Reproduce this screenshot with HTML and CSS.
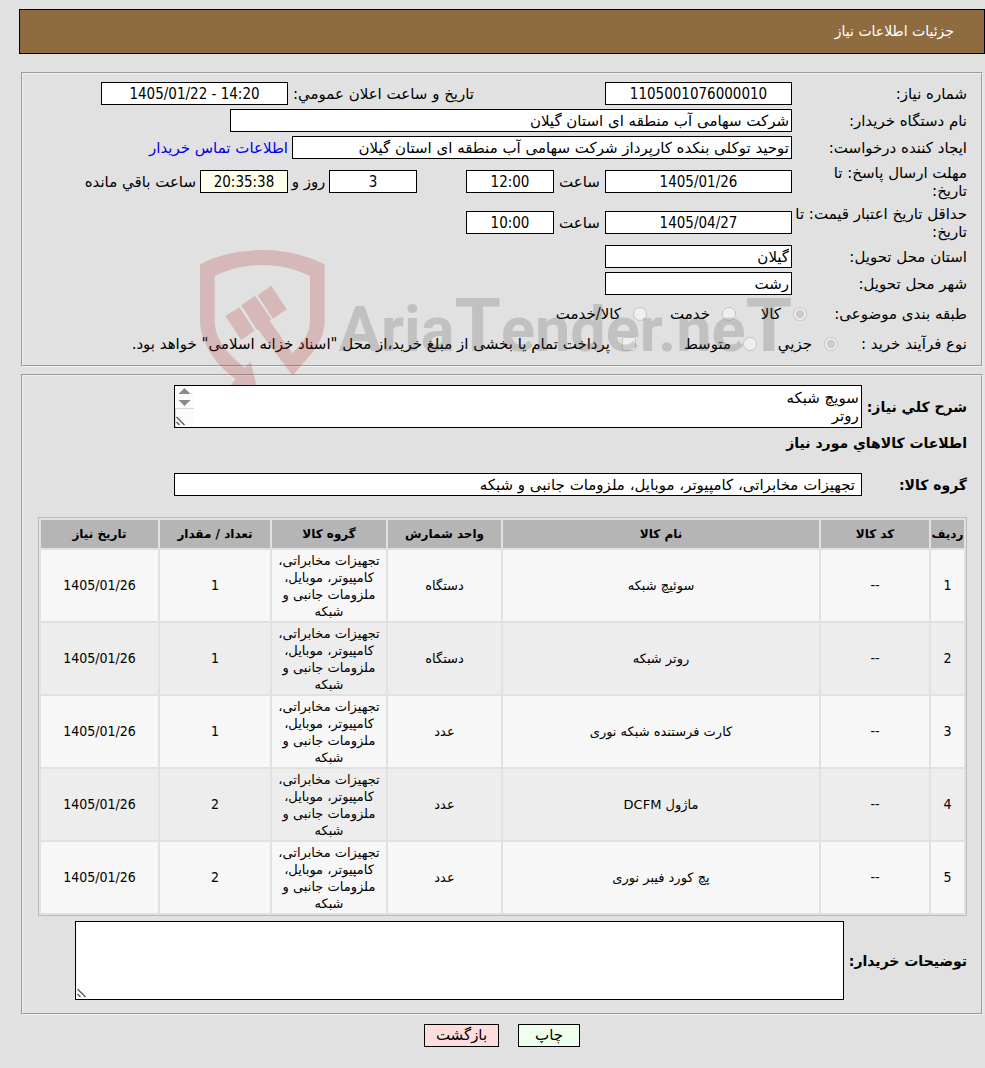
FILE: index.html
```html
<!DOCTYPE html>
<html lang="fa" dir="rtl">

<head>
    <meta charset="UTF-8">
    <meta name="viewport" content="width=device-width, initial-scale=1.0">
    <title>جزئیات اطلاعات نیاز</title>
    <link rel="stylesheet" href="styles.css">
</head>

<body>
    <div class="page">
        <h1 class="title">جزئیات اطلاعات نیاز</h1>

        <fieldset class="box info">
            <div class="row">
                <label class="name" for="needNo">شماره نیاز:</label>
                <input class="field mid num" type="text" id="needNo" value="1105001076000010" readonly>
                <label class="announce" for="pubDate">تاريخ و ساعت اعلان عمومي:</label>
                <input class="field mid num" type="text" id="pubDate" value="1405/01/22 - 14:20" readonly>
            </div>
            <div class="row">
                <label class="name" for="org">نام دستگاه خریدار:</label>
                <input class="field wide" type="text" id="org" value="شرکت سهامی آب منطقه ای استان گیلان" readonly>
            </div>
            <div class="row">
                <label class="name" for="creator">ایجاد کننده درخواست:</label>
                <input class="field long" type="text" id="creator" value="توحید توکلی بنکده کارپرداز شرکت سهامی آب منطقه ای استان گیلان" readonly>
                <a class="contact" href="#">اطلاعات تماس خریدار</a>
            </div>
            <div class="row double">
                <label class="name" for="replyDate">مهلت ارسال پاسخ: تا<br>تاریخ:</label>
                <input class="field mid num" type="text" id="replyDate" value="1405/01/26" readonly>
                <label class="hour" for="replyHour">ساعت</label>
                <input class="field short num" type="text" id="replyHour" value="12:00" readonly>
                <input class="field short num days" type="text" id="leftDays" value="3" readonly>
                <label class="day" for="leftDays">روز و</label>
                <input class="field short num left-time" type="text" id="leftTime" value="20:35:38" readonly>
                <label class="after" for="leftTime">ساعت باقي مانده</label>
            </div>
            <div class="row double">
                <label class="name" for="priceDate">حداقل تاریخ اعتبار قیمت: تا<br>تاریخ:</label>
                <input class="field mid num" type="text" id="priceDate" value="1405/04/27" readonly>
                <label class="hour" for="priceHour">ساعت</label>
                <input class="field short num" type="text" id="priceHour" value="10:00" readonly>
            </div>
            <div class="row">
                <label class="name" for="state">استان محل تحویل:</label>
                <input class="field mid" type="text" id="state" value="گیلان" readonly>
            </div>
            <div class="row">
                <label class="name" for="city">شهر محل تحویل:</label>
                <input class="field mid" type="text" id="city" value="رشت" readonly>
            </div>
            <div class="row options">
                <span class="name subject">طبقه بندی موضوعی:</span>
                <label class="opt goods"><input type="radio" name="subject" checked disabled>کالا</label>
                <label class="opt service"><input type="radio" name="subject" disabled>خدمت</label>
                <label class="opt"><input type="radio" name="subject" disabled>کالا/خدمت</label>
            </div>
            <div class="row options">
                <span class="name process">نوع فرآیند خرید :</span>
                <label class="opt small"><input type="radio" name="process" checked disabled>جزيي</label>
                <label class="opt medium"><input type="radio" name="process" disabled>متوسط</label>
                <label class="opt"><input type="checkbox" disabled>پرداخت تمام یا بخشی از مبلغ خرید،از محل "اسناد خزانه اسلامی" خواهد بود.</label>
            </div>
        </fieldset>

        <fieldset class="box goods-box">
            <div class="line">
                <label class="bold" for="desc">شرح کلي نیاز:</label>
                <div class="area-wrap">
                    <textarea class="area desc" id="desc" readonly>سویچ شبکه
روتر</textarea>
                    <svg class="spin" width="19" height="41" viewBox="0 0 19 41">
                        <path fill="#fbfbfb" d="M0 0h19v41H0z" />
                        <path fill="#8a8a8a" d="M9.500 2l6 6h-12zM9.500 20l-6-6h12z" />
                        <path stroke="#d6d6d6" d="M0 22.500h19M.5 23v18" />
                        <path stroke="#555" stroke-width="1.300" d="M1.500 31l8 8M1.500 36l3 3" />
                    </svg>
                </div>
            </div>
            <h2 class="bold subtitle">اطلاعات کالاهاي مورد نیاز</h2>
            <div class="line group-line">
                <label class="bold" for="group">گروه کالا:</label>
                <input class="field group" type="text" id="group" value="تجهیزات مخابراتی، کامپیوتر، موبایل، ملزومات جانبی و شبکه" readonly>
            </div>

            <table class="grid">
                <colgroup>
                    <col class="c-row"><col class="c-code"><col><col class="c-unit"><col class="c-group"><col class="c-count"><col class="c-date">
                </colgroup>
                <thead>
                    <tr>
                        <th>ردیف</th>
                        <th>کد کالا</th>
                        <th>نام کالا</th>
                        <th>واحد شمارش</th>
                        <th>گروه کالا</th>
                        <th>تعداد / مقدار</th>
                        <th>تاریخ نیاز</th>
                    </tr>
                </thead>
                <tbody>
                    <tr>
                        <td class="num">1</td>
                        <td class="num">--</td>
                        <td>سوئیچ شبکه</td>
                        <td>دستگاه</td>
                        <td>تجهیزات مخابراتی،<br>کامپیوتر، موبایل،<br>ملزومات جانبی و<br>شبکه</td>
                        <td class="num">1</td>
                        <td class="num">1405/01/26</td>
                    </tr>
                    <tr>
                        <td class="num">2</td>
                        <td class="num">--</td>
                        <td>روتر شبکه</td>
                        <td>دستگاه</td>
                        <td>تجهیزات مخابراتی،<br>کامپیوتر، موبایل،<br>ملزومات جانبی و<br>شبکه</td>
                        <td class="num">1</td>
                        <td class="num">1405/01/26</td>
                    </tr>
                    <tr>
                        <td class="num">3</td>
                        <td class="num">--</td>
                        <td>کارت فرستنده شبکه نوری</td>
                        <td>عدد</td>
                        <td>تجهیزات مخابراتی،<br>کامپیوتر، موبایل،<br>ملزومات جانبی و<br>شبکه</td>
                        <td class="num">1</td>
                        <td class="num">1405/01/26</td>
                    </tr>
                    <tr>
                        <td class="num">4</td>
                        <td class="num">--</td>
                        <td>ماژول DCFM</td>
                        <td>عدد</td>
                        <td>تجهیزات مخابراتی،<br>کامپیوتر، موبایل،<br>ملزومات جانبی و<br>شبکه</td>
                        <td class="num">2</td>
                        <td class="num">1405/01/26</td>
                    </tr>
                    <tr>
                        <td class="num">5</td>
                        <td class="num">--</td>
                        <td>پچ کورد فیبر نوری</td>
                        <td>عدد</td>
                        <td>تجهیزات مخابراتی،<br>کامپیوتر، موبایل،<br>ملزومات جانبی و<br>شبکه</td>
                        <td class="num">2</td>
                        <td class="num">1405/01/26</td>
                    </tr>
                </tbody>
            </table>

            <div class="line notes-line">
                <label class="bold" for="notes">توضیحات خریدار:</label>
                <div class="area-wrap">
                    <textarea class="area notes" id="notes" readonly></textarea>
                    <svg class="grip" width="11" height="11" viewBox="0 0 11 11">
                        <path stroke="#555" stroke-width="1.300" d="M1.500 1l8 8M1.500 6l3 3" />
                    </svg>
                </div>
            </div>
        </fieldset>

        <div class="buttons">
            <button class="btn print" type="button">چاپ</button>
            <button class="btn back" type="button">بازگشت</button>
        </div>

        <!-- site watermark -->
        <svg class="watermark" width="610" height="137" viewBox="357 57 1830 411">
            <g fill="#b4282d" fill-opacity=".22">
                <path d="M360 103C470 46 620 46 734 103V270C734 340 690 375 638 437L533 297L530 299L484 226L525 197L574 268L570 274L637 370C672 335 690 310 690 270V138C600 94 495 94 404 138V270C404 320 430 360 494 413L512 395L530 470L452 465L467 447C400 400 360 330 360 270Z" />
                <path d="M436 258L478 232L524 302L484 330ZM533 196L574 167L620 238L579 266Z" />
            </g>
            <text class="brand" x="776" y="363">Aria<tspan class="big">T</tspan>ender.ne<tspan class="big">T</tspan></text>
        </svg>
    </div>
</body>

</html>
```
FILE: styles.css
```css
* {
    box-sizing: border-box;
}

body {
    margin: 0;
    background-color: #e1e1e1;
    color: #000;
    font: 15px/18px "DejaVu Sans", sans-serif;
}

input,
textarea,
button {
    margin: 0;
    font: inherit;
    color: inherit;
}

.page {
    position: relative;
    padding: 9px 0 22px;
}

.title {
    margin: 0 0 0 19px;
    padding: 0 30px;
    height: 45px;
    border: 1px solid #000;
    background-color: #8f6c40;
    color: #fff;
    font-size: 14px;
    font-weight: normal;
    line-height: 43px;
}

/* boxes */
.box {
    min-width: 0;
    margin: 0 2px 0 21px;
    padding: 8px 14px;
    border: 2px groove threedface;
}

.info {
    margin-top: 18px;
    margin-bottom: 7px;
    padding-bottom: 6px;
}

.row {
    display: flex;
    align-items: center;
    height: 23px;
    margin-bottom: 4px;
    white-space: nowrap;
}

.row.double {
    height: 37px;
}

.row.options {
    height: 30px;
    margin: 0;
}

.name {
    flex: none;
    width: 175px;
}

.field {
    flex: none;
    height: 23px;
    padding: 0 2px;
    border: 1px solid #000;
    background-color: #fff;
}

.num {
    direction: ltr;
    font-family: "DejaVu Sans Condensed", "DejaVu Sans", sans-serif;
    text-align: center;
}

.mid {
    width: 187px;
}

.wide {
    width: 562px;
}

.long {
    width: 500px;
}

.short {
    width: 88px;
}

.days {
    margin-right: 49px;
}

.left-time {
    background-color: #ffffee;
}

.announce {
    width: 186px;
    margin-right: 131px;
}

.contact {
    margin-right: 4px;
    color: #0000ee;
    text-decoration: none;
}

.hour {
    width: 51px;
    text-align: center;
}

.day {
    width: 41px;
    text-align: center;
}

.after {
    margin-right: 4px;
}

/* radio rows */
.subject {
    width: 160px;
}

.process {
    width: 129px;
}

.opt {
    display: flex;
    align-items: center;
    gap: 12px;
}

.opt input {
    width: 14px;
    height: 14px;
}

.goods {
    width: 71px;
}

.service {
    width: 89px;
}

.small {
    width: 81px;
}

.medium {
    width: 121px;
}

/* goods */
.goods-box {
    padding: 9px 14px 13px 15px;
}

.line {
    display: flex;
    align-items: center;
    gap: 5px;
}

.bold {
    font-size: 14px;
    font-weight: bold;
}

.area-wrap {
    position: relative;
    display: flex;
}

.area {
    display: block;
    padding: 3px 2px;
    border: 1px solid #000;
    background-color: #fff;
    resize: none;
    overflow: hidden;
}

.desc {
    width: 688px;
    height: 43px;
}

.spin {
    position: absolute;
    left: 1px;
    top: 1px;
}

.grip {
    position: absolute;
    left: 1px;
    bottom: 1px;
}

.line .bold {
    flex: none;
    min-width: 100px;
}

.subtitle {
    margin: 6px 0 21px;
}

.group {
    width: 688px;
    padding: 0 6px;
}

.grid {
    width: 100%;
    margin: 21px 0 5px;
    border: 1px solid #bbb;
    border-spacing: 2px;
    table-layout: fixed;
    font-size: 13px;
    line-height: 17px;
    text-align: center;
}

.c-row { width: 33px; }
.c-code { width: 108px; }
.c-unit { width: 113px; }
.c-group { width: 114px; }
.c-count { width: 110px; }
.c-date { width: 117px; }

.grid th {
    height: 28px;
    padding: 0;
    background-color: #b5b5b5;
    font-size: 12px;
    white-space: nowrap;
}

.grid td {
    height: 71px;
    padding: 1px;
    background-color: #f7f7f7;
}

.grid .num {
    font-size: 14px;
}

.grid tr:nth-child(even) td {
    background-color: #ededed;
}

.notes {
    width: 769px;
    height: 79px;
}

/* buttons */
.buttons {
    display: flex;
    justify-content: center;
    gap: 19px;
    margin: 9px 2px 0 21px;
}

.btn {
    height: 23px;
    padding: 0 10px;
    border: 1px solid #000;
    line-height: 21px;
}

.print {
    width: 62px;
    background-color: #eeffee;
}

.back {
    width: 75px;
    background-color: #ffdddd;
}

.watermark {
    position: absolute;
    top: 249px;
    right: 176px;
    direction: ltr;
    pointer-events: none;
}

.brand {
    fill: #414141;
    fill-opacity: .2;
    font-family: Roboto, "Liberation Sans", sans-serif;
    font-size: 189px;
    font-weight: bold;
}

.big {
    font-size: 225px;
}
```
